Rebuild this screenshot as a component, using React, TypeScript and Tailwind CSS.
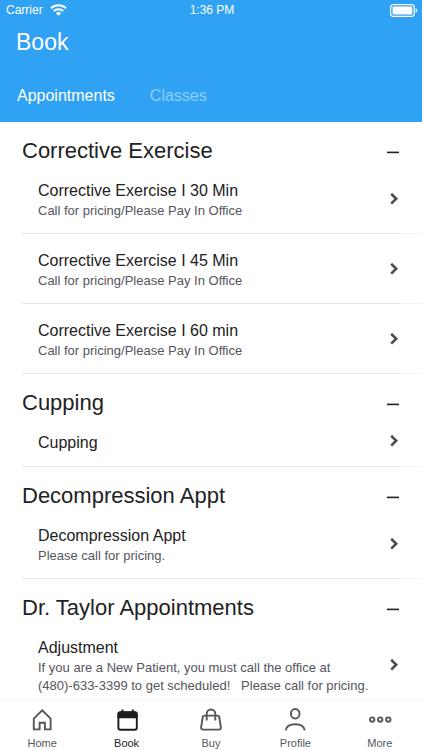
import { useState } from 'react';
import type { ReactNode } from 'react';
import clsx from 'clsx';

interface Service {
  name: string;
  note?: string;
}

interface ServiceGroup {
  title: string;
  services: Service[];
}

const PRICING_NOTE = 'Call for pricing/Please Pay In Office';

const GROUPS: ServiceGroup[] = [
  {
    title: 'Corrective Exercise',
    services: [
      { name: 'Corrective Exercise I 30 Min', note: PRICING_NOTE },
      { name: 'Corrective Exercise I 45 Min', note: PRICING_NOTE },
      { name: 'Corrective Exercise I 60 min', note: PRICING_NOTE },
    ],
  },
  { title: 'Cupping', services: [{ name: 'Cupping' }] },
  {
    title: 'Decompression Appt',
    services: [{ name: 'Decompression Appt', note: 'Please call for pricing.' }],
  },
  {
    title: 'Dr. Taylor Appointments',
    services: [
      {
        name: 'Adjustment',
        note: 'If you are a New Patient, you must call the office at\n(480)-633-3399 to get scheduled!   Please call for pricing.',
      },
    ],
  },
];

const TABS = ['Appointments', 'Classes'];

function WifiIcon() {
  return (
    <svg width="17" height="12" viewBox="0 0 17 12" fill="none" stroke="currentColor" strokeWidth="2" aria-hidden="true">
      <path d="M1 4.3a10.8 10.8 0 0 1 15 0" />
      <path d="M3.7 7.1a6.9 6.9 0 0 1 9.6 0" />
      <path d="M8.5 11.8 5.9 9.2a3.8 3.8 0 0 1 5.2 0z" fill="currentColor" stroke="none" />
    </svg>
  );
}

function BatteryIcon() {
  return (
    <svg width="28" height="13" viewBox="0 0 28 13" fill="none" aria-hidden="true">
      <rect x="0.6" y="0.6" width="23.6" height="11.8" rx="2.6" stroke="currentColor" strokeWidth="1.2" />
      <rect x="2.6" y="2.6" width="19.6" height="7.8" rx="0.8" fill="currentColor" />
      <path d="M25.6 4.3c1.2.4 1.7 1.2 1.7 2.2s-.5 1.8-1.7 2.2z" fill="currentColor" />
    </svg>
  );
}

function MinusIcon() {
  return (
    <svg width="12" height="12" viewBox="0 0 12 12" stroke="currentColor" strokeWidth="1.6" aria-hidden="true">
      <path d="M0 7.4h12" />
    </svg>
  );
}

function PlusIcon() {
  return (
    <svg width="12" height="12" viewBox="0 0 12 12" stroke="currentColor" strokeWidth="1.6" aria-hidden="true">
      <path d="M0 6.4h12M6 .4v12" />
    </svg>
  );
}

function ChevronIcon() {
  return (
    <svg className="shrink-0" width="8" height="12" viewBox="0 0 8 12" fill="none" stroke="#4b4b4f" strokeWidth="2.6" aria-hidden="true">
      <path d="M1.2.8 6.2 5.7l-5 4.9" />
    </svg>
  );
}

function NavSvg({ children }: { children: ReactNode }) {
  return (
    <svg width="24" height="24" viewBox="0 0 24 24" fill="none" stroke="currentColor" strokeWidth="1.9" aria-hidden="true">
      {children}
    </svg>
  );
}

const NAV_ITEMS = [
  {
    label: 'Home',
    icon: (
      <NavSvg>
        <path d="M3.8 22.4V11.6l8.4-8.2 8.4 8.2v10.8h-5.7v-6.6H9.6v6.6z" />
      </NavSvg>
    ),
  },
  {
    label: 'Book',
    icon: (
      <NavSvg>
        <rect x="3.4" y="5.3" width="18.4" height="17.4" rx="2" />
        <path d="M2.4 11.2V6.8c0-1.4 1-2.4 2.4-2.4h15.4c1.4 0 2.4 1 2.4 2.4v4.4z" fill="currentColor" stroke="none" />
        <path d="M7.4 2.6v3M17.8 2.6v3" />
      </NavSvg>
    ),
  },
  {
    label: 'Buy',
    icon: (
      <NavSvg>
        <path d="M5.4 8.6h13.2c.9 0 1.5.5 1.6 1.4l1.7 10.4c.2 1.3-.6 2.2-1.9 2.2H4c-1.3 0-2.1-.9-1.9-2.2L3.8 10c.1-.9.7-1.4 1.6-1.4z" />
        <path d="M7.7 13.6V6.8a4.3 4.3 0 0 1 8.6 0v6.8" />
      </NavSvg>
    ),
  },
  {
    label: 'Profile',
    icon: (
      <NavSvg>
        <ellipse cx="12.2" cy="6.8" rx="4.3" ry="4.8" />
        <path d="M2.7 23.4c.6-4 4.6-6.2 9.5-6.2s8.9 2.2 9.5 6.2" />
      </NavSvg>
    ),
  },
  {
    label: 'More',
    icon: (
      <NavSvg>
        <circle cx="4.2" cy="12.6" r="2.2" />
        <circle cx="12.2" cy="12.6" r="2.2" />
        <circle cx="20.3" cy="12.6" r="2.2" />
      </NavSvg>
    ),
  },
];

function StatusBar() {
  return (
    <div className="grid h-5 grid-cols-3 items-center pl-1.5 pr-1 text-xs">
      <span className="flex items-center gap-[7px]">
        Carrier
        <WifiIcon />
      </span>
      <span className="text-center">1:36 PM</span>
      <span className="flex justify-end">
        <BatteryIcon />
      </span>
    </div>
  );
}

function ServiceRow({ service }: { service: Service }) {
  return (
    <li>
      <button type="button" className="flex w-full items-center justify-between py-[13px] pl-[38px] pr-6 text-left">
        <span className="flex flex-col gap-px pt-1">
          <span className="text-base leading-5 text-[#222222]">{service.name}</span>
          {service.note && (
            <span className="whitespace-pre-wrap text-[13px] leading-[18px] text-[#55555c]">{service.note}</span>
          )}
        </span>
        <ChevronIcon />
      </button>
      <div className="flex h-px pl-[22px]">
        <div className="flex-1 bg-[#e6e6e6]" />
        <div className="w-[22px] bg-[#f4f4f4]" />
      </div>
    </li>
  );
}

function Group({ group }: { group: ServiceGroup }) {
  const [open, setOpen] = useState(true);

  return (
    <section>
      <h2>
        <button
          type="button"
          aria-expanded={open}
          onClick={() => setOpen(!open)}
          className="flex w-full items-center justify-between pl-[22px] pr-[23px] pt-4 text-left text-[22px] leading-[26px] text-[#222222]"
        >
          {group.title}
          {open ? <MinusIcon /> : <PlusIcon />}
        </button>
      </h2>
      {open && (
        <ul>
          {group.services.map((service) => (
            <ServiceRow key={service.name} service={service} />
          ))}
        </ul>
      )}
    </section>
  );
}

export default function App() {
  const [tab, setTab] = useState('Appointments');

  return (
    <div className="flex h-dvh flex-col bg-white font-['Liberation_Sans',Arial,sans-serif]">
      <header className="shrink-0 bg-[#2fa2f3] pb-4 text-white">
        <StatusBar />
        <h1 className="px-4 pt-2 text-[23px] leading-7">Book</h1>
        <div role="tablist" className="flex gap-[35px] px-[17px] pt-[30px]">
          {TABS.map((name) => (
            <button
              key={name}
              type="button"
              role="tab"
              aria-selected={tab === name}
              onClick={() => setTab(name)}
              className={clsx('text-base leading-5', tab === name ? 'text-white' : 'text-[#90cdf9]')}
            >
              {name}
            </button>
          ))}
        </div>
      </header>

      <main className="min-h-0 flex-1 overflow-y-auto [scrollbar-width:none]">
        {tab === 'Appointments' && GROUPS.map((group) => <Group key={group.title} group={group} />)}
      </main>

      <nav className="grid shrink-0 grid-cols-5 border-t border-[#f4f4f4] bg-white pt-[7px]">
        {NAV_ITEMS.map(({ label, icon }) => (
          <a
            key={label}
            href={`#${label.toLowerCase()}`}
            aria-current={label === 'Book' ? 'page' : undefined}
            className={clsx(
              'flex flex-col items-center gap-[5px] text-[11px] leading-[14px]',
              label === 'Book' ? 'text-[#1e1e22]' : 'text-[#55555c]',
            )}
          >
            {icon}
            {label}
          </a>
        ))}
      </nav>
    </div>
  );
}
